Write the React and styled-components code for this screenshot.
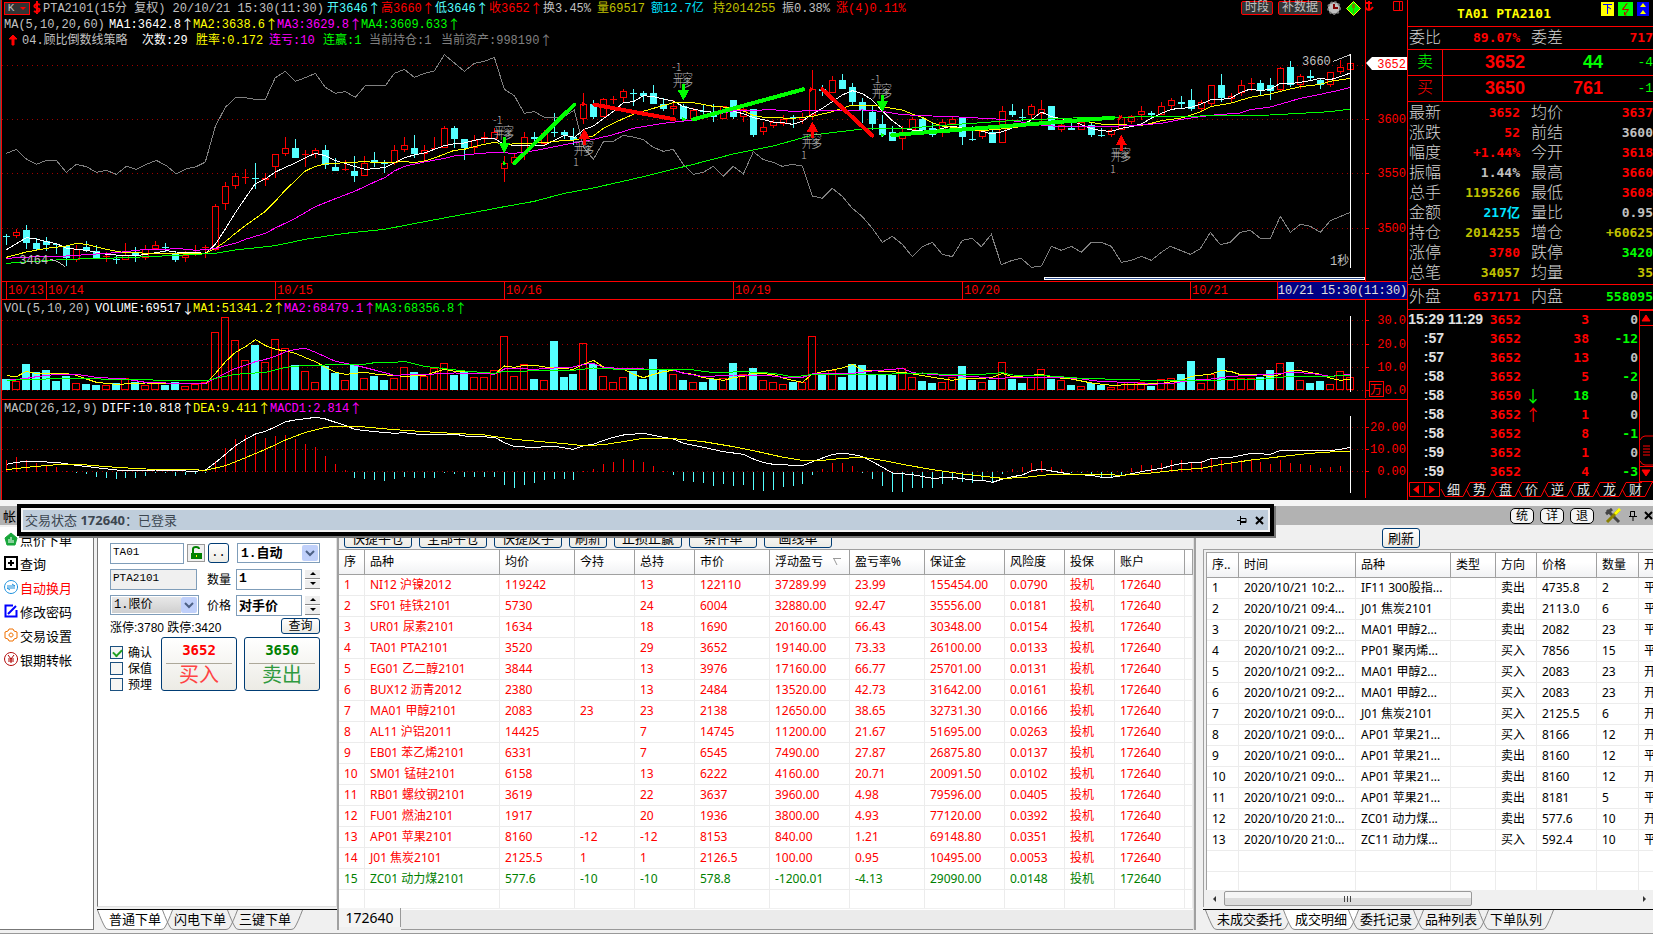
import React from 'react'
import styled, { createGlobalStyle } from 'styled-components';

const RED = '#ff0000';
const GREEN = '#00ff00';
const CYAN = '#54ffff';
const YELLOW = '#ffff00';
const OLIVE = '#c0c000';
const MAGENTA = '#ff00ff';
const SILVER = '#c0c0c0';
const GRAY = '#808080';

const MONO = `'Liberation Mono', 'Noto Sans CJK SC', monospace`;
const BOLD = `'DejaVu Sans Mono', 'Noto Sans CJK SC', monospace`;
const SANS = `'Noto Sans', 'Noto Sans CJK SC', sans-serif`;

/* ---------- data ---------- */

// high, body top, body bottom, low, 1 = up (chart units, 3 per pixel)
const candles = [
  [703,709,712,735,0],[688,697,706,714,1],[675,690,728,747,0],[714,729,747,753,0],[712,724,735,753,0],
  [728,732,735,762,0],[735,738,773,798,0],[735,748,779,785,1],[722,741,751,755,0],[735,754,774,777,0],
  [755,768,771,786,1],[765,776,779,791,0],[730,765,779,780,1],[741,757,768,786,0],[735,748,772,779,1],
  [722,736,747,750,1],[729,741,744,755,0],[755,762,779,786,0],[753,766,773,785,1],[735,755,760,767,1],
  [735,742,745,773,1],[612,619,748,752,1],[546,559,611,630,1],[519,529,557,567,1],[507,530,533,551,1],
  [489,534,537,567,0],[519,535,540,557,1],[462,463,500,534,1],[411,445,460,468,1],[417,444,474,474,0],
  [450,462,465,501,1],[444,451,460,475,1],[435,450,493,507,0],[475,502,513,513,0],[480,508,511,514,1],
  [468,513,528,546,0],[468,490,527,528,1],[456,480,486,501,0],[480,488,491,519,0],[435,451,487,495,1],
  [411,436,448,456,1],[405,444,462,474,0],[435,451,460,480,1],[411,444,448,451,1],[378,385,443,444,1],
  [378,384,417,444,0],[417,417,444,480,0],[405,419,443,462,1],[396,411,414,429,1],[384,397,416,418,1],
  [468,490,506,546,1],[460,470,487,490,1],[396,412,460,480,1],[397,411,417,430,0],[390,400,430,435,1],
  [339,397,400,411,0],[390,397,405,418,0],[384,411,420,435,0],[279,313,355,372,1],[300,313,351,357,0],
  [295,296,349,350,1],[288,296,299,313,1],[267,274,292,307,1],[267,280,283,318,0],[273,279,288,306,0],
  [255,279,312,313,0],[294,311,327,333,0],[300,319,325,345,1],[312,318,357,360,0],[325,330,355,357,1],
  [313,334,337,345,0],[313,335,350,366,0],[318,319,355,357,1],[300,300,351,357,0],[325,328,349,366,1],
  [327,327,405,411,0],[366,380,394,405,1],[360,367,376,384,1],[345,358,370,378,1],[345,351,354,384,0],
  [339,352,358,372,1],[210,268,345,360,1],[255,267,273,288,0],[228,241,278,280,1],[222,240,267,268,0],
  [249,261,306,318,0],[295,306,330,370,0],[318,335,372,390,0],[345,372,405,411,0],[378,396,423,424,0],
  [378,396,415,450,1],[350,358,390,392,1],[350,357,390,392,0],[366,384,405,411,0],[357,367,395,411,1],
  [348,358,370,375,1],[352,354,411,435,0],[378,417,420,423,0],[390,392,409,417,1],[387,395,429,430,0],
  [318,334,428,430,1],[312,333,345,351,0],[327,350,353,364,0],[312,319,343,360,1],[300,328,340,372,1],
  [318,318,390,391,0],[370,375,388,396,1],[360,384,390,391,0],[363,367,388,389,1],[366,376,405,411,0],
  [384,405,408,411,0],[384,391,403,411,1],[345,352,388,390,1],[345,347,365,372,1],[318,334,343,360,1],
  [333,340,345,357,0],[306,319,343,346,1],[294,301,317,330,1],[288,306,312,324,0],[267,300,327,333,0],
  [300,307,325,333,1],[255,256,310,318,1],[222,255,294,306,0],[279,289,297,306,1],[240,256,278,288,1],
  [234,249,252,273,1],[240,249,272,288,0],[234,255,272,300,0],[202,203,270,275,1],[183,201,255,260,0],
  [222,229,254,266,1],[210,228,234,240,0],[234,240,255,267,0],[216,217,253,260,1],[180,202,214,222,1],
  [165,190,208,210,1],
];

const volumes = [
  252,257,207,232,225,258,243,265,267,270,271,264,250,261,270,264,270,261,273,268,262,112,67,136,196,150,202,
  132,160,210,228,262,212,234,256,208,250,243,255,250,217,231,244,220,205,240,227,247,247,226,124,244,208,252,
  254,138,246,237,145,207,244,262,247,228,252,192,222,238,255,262,261,252,250,204,238,219,256,262,268,261,260,
  124,238,225,246,207,210,237,237,240,220,247,258,264,262,247,213,255,262,255,202,252,264,246,223,252,256,270,
  274,264,270,277,262,262,262,273,253,250,237,198,265,237,189,256,250,250,246,225,205,201,256,264,258,268,229,
  245,
];

const macdBars = [
  495,486,495,503,511,516,529,534,537,546,549,552,549,549,543,533,533,543,540,537,533,497,459,432,420,423,430,
  423,420,432,447,456,483,507,525,549,552,555,558,552,546,549,549,549,533,537,546,546,546,546,570,579,570,564,
  555,552,552,555,529,522,507,501,492,495,501,513,529,540,558,561,564,573,567,573,570,585,588,585,576,573,567,
  540,522,504,504,513,534,552,573,591,591,579,579,579,567,555,561,564,558,564,537,522,516,504,498,516,522,533,
  534,540,549,549,543,519,510,510,504,495,495,500,498,489,495,498,495,492,501,507,495,504,507,510,519,516,513,
  512,
];

const priceLines = [
  ['#808080', '19,460 49,448 79,477 109,493 139,481 169,481 199,517 229,493 259,500 289,517 319,511 349,523 379,499 409,508 439,493 469,481 499,497 529,522 559,506 589,500 616,486 646,379 676,322 706,293 736,293 766,298 796,298 826,233 856,214 886,244 916,233 946,220 976,262 1006,280 1036,275 1066,292 1096,257 1156,257 1183,220 1213,208 1243,232 1273,220 1303,213 1333,164 1363,189 1393,214 1423,190 1453,184 1483,172 1513,268 1543,287 1573,340 1603,335 1633,352 1690,352 1723,330 1750,440 1780,478 1810,426 1840,424 1870,406 1900,411 1930,419 1960,442 1990,454 2020,448 2050,494 2080,523 2110,517 2140,499 2170,528 2200,499 2230,522 2260,455 2290,479 2320,487 2347,499 2377,493 2407,498 2437,588 2467,595 2497,565 2527,589 2557,625 2587,650 2617,685 2647,727 2677,709 2707,733 2737,770 2767,740 2797,727 2827,763 2857,770 2887,721 2917,715 2944,740 2974,703 3004,794 3034,782 3064,775 3094,802 3124,798 3154,739 3184,751 3214,739 3244,757 3274,727 3304,727 3334,739 3364,787 3394,781 3424,769 3454,781 3484,757 3511,739 3571,763 3601,746 3631,697 3661,734 3691,727 3721,697 3751,691 3781,715 3811,715 3841,649 3871,697 3901,673 3931,679 3961,697 3991,662 4051,637'],
  ['#ffffff', '19,749 79,713 109,717 139,725 169,731 199,744 229,748 259,751 289,757 319,763 379,767 409,767 439,763 469,758 499,752 529,756 589,758 616,760 646,733 676,687 706,638 736,594 766,551 796,537 826,516 856,502 886,489 916,473 946,460 976,467 1006,482 1036,490 1066,500 1096,508 1126,506 1156,502 1183,489 1213,473 1243,465 1273,459 1303,448 1333,437 1363,431 1393,429 1423,421 1453,415 1483,416 1513,433 1543,436 1633,436 1663,421 1693,406 1723,412 1753,388 1780,378 1813,354 1840,334 1870,308 1900,305 1930,287 1960,290 1990,297 2020,303 2050,320 2080,327 2110,333 2140,337 2170,336 2200,334 2230,341 2260,353 2290,359 2320,366 2350,368 2377,373 2407,364 2437,342 2467,325 2497,305 2527,285 2557,272 2587,281 2617,300 2647,333 2677,362 2707,384 2737,390 2767,393 2797,393 2827,385 2857,378 2887,384 2944,393 2974,402 3004,396 3034,385 3064,376 3094,360 3124,336 3154,350 3184,356 3214,362 3244,374 3274,386 3304,392 3334,394 3364,385 3394,380 3424,372 3454,355 3484,340 3514,328 3574,322 3601,313 3631,300 3661,298 3691,295 3721,278 3751,267 3781,272 3811,268 3841,250 3871,251 3901,247 3931,242 3961,235 3991,239 4021,230 4051,219'],
  [YELLOW, '19,772 79,756 139,745 199,738 229,730 259,733 319,748 349,754 379,758 469,760 529,760 616,760 646,745 676,725 706,700 736,677 796,634 826,604 856,570 886,542 916,513 946,499 976,492 1036,488 1096,485 1156,489 1213,484 1243,488 1273,483 1303,474 1363,451 1393,448 1423,440 1453,433 1483,427 1513,433 1633,428 1693,421 1723,420 1780,408 1810,385 1840,370 1870,356 1900,343 1960,325 2020,308 2080,308 2140,319 2200,323 2230,333 2260,346 2290,352 2377,355 2437,349 2497,335 2557,315 2617,315 2677,325 2707,330 2737,342 2767,352 2797,368 2827,378 2850,381 2887,386 2944,392 3004,387 3064,380 3124,368 3184,364 3244,363 3274,367 3304,372 3334,374 3424,376 3454,370 3484,362 3544,354 3601,336 3631,320 3691,310 3751,292 3811,282 3871,267 3901,260 3961,253 3991,244 4051,235'],
  [MAGENTA, '19,775 139,768 199,768 289,762 349,758 439,748 499,748 529,745 589,751 646,746 676,737 706,730 736,718 796,700 826,684 886,655 946,620 1006,596 1066,573 1126,545 1156,532 1183,513 1213,499 1273,486 1333,475 1363,468 1423,462 1483,457 1543,460 1603,452 1693,434 1780,418 1840,404 1900,385 1990,370 2080,360 2140,345 2200,333 2317,329 2377,334 2437,332 2587,330 2647,334 2707,344 2797,348 2857,350 2917,353 3004,358 3064,366 3124,375 3184,380 3244,379 3334,379 3424,375 3484,370 3544,358 3631,346 3721,339 3751,329 3811,321 3901,295 3961,283 4021,270 4051,262'],
  [GREEN, '19,790 199,778 379,773 529,766 646,760 706,750 826,737 916,718 1036,700 1153,688 1273,665 1423,637 1513,620 1603,604 1693,580 1780,564 1930,530 2080,493 2200,462 2320,438 2437,405 2587,387 2737,384 2797,378 2887,372 2974,366 3064,360 3244,353 3484,350 3661,347 3811,345 3901,340 3991,335 4051,327'],
];

// index,y pairs
const volumeLines = [
  [YELLOW, '0,242 1,245 2,229 3,236 6,236 7,241 8,252 9,262 11,268 14,264 17,265 20,267 21,235 22,200 23,172 24,155 25,134 26,152 27,163 28,168 29,175 30,188 31,200 32,217 33,232 34,238 36,232 37,237 40,244 42,241 43,232 44,223 45,229 47,230 49,238 50,213 51,217 52,211 53,211 54,216 57,223 58,208 59,196 60,216 62,222 63,238 64,248 65,238 66,230 67,226 68,234 69,238 70,248 72,256 73,248 74,244 75,235 77,238 78,250 80,262 81,237 82,230 84,219 85,208 86,225 88,229 90,232 91,237 93,247 95,256 96,250 98,250 99,247 100,235 101,246 104,238 105,247 107,252 109,264 111,271 114,268 116,265 118,256 119,244 121,237 122,226 123,230 124,240 126,238 127,246 128,238 129,226 130,227 132,238 133,250 134,256 135,252'],
  [MAGENTA, '0,256 2,250 3,245 5,238 7,238 9,247 12,252 14,262 17,265 20,265 21,250 22,235 23,220 24,211 25,200 26,193 27,184 28,170 29,163 30,160 31,172 33,199 35,210 37,225 39,241 41,238 43,237 45,234 48,235 49,238 50,222 51,220 53,223 55,219 57,216 58,208 59,205 60,218 64,222 66,222 67,225 68,235 70,245 73,240 76,240 78,247 80,247 81,237 85,235 87,228 89,223 90,220 91,233 94,241 97,244 99,250 103,247 106,247 108,252 110,260 113,262 115,268 117,265 119,256 121,252 123,244 127,238 129,232 131,235 133,244 135,238'],
  [GREEN, '0,256 6,250 20,258 21,250 23,238 26,232 28,217 30,211 36,208 37,203 39,202 40,199 42,214 44,221 46,228 49,235 50,229 57,226 59,219 61,222 67,222 69,225 71,233 74,230 77,235 79,246 81,238 88,238 92,234 94,238 98,238 100,233 101,240 104,241 108,250 115,256 121,256 123,254 126,253 129,244 133,244 135,240'],
];

const macdLines = [
  ['#ffffff', '0,508 1,502 2,499 5,502 7,511 9,518 11,525 13,528 15,525 19,529 20,525 21,503 22,478 23,452 24,433 25,417 26,409 27,395 28,380 29,375 30,371 31,367 32,372 33,382 34,391 35,403 37,410 39,415 40,413 42,420 44,418 45,417 46,423 49,427 50,443 51,455 53,457 55,454 57,463 58,452 59,448 60,436 61,427 62,420 64,415 66,427 67,432 68,445 70,457 72,470 74,478 75,492 76,503 77,508 80,512 81,500 83,478 84,475 85,478 86,485 87,500 88,517 89,534 91,539 93,550 95,547 97,555 98,556 99,562 100,552 101,545 102,540 103,527 104,523 105,528 107,538 109,541 110,547 111,547 112,542 114,530 116,520 117,512 118,505 120,502 121,490 123,487 125,475 127,478 128,466 129,468 131,466 133,467 134,463 135,457'],
  [YELLOW, '0,524 2,517 5,509 8,510 11,517 14,522 18,523 20,526 22,512 24,488 26,463 28,435 30,412 32,397 33,394 36,396 39,404 43,412 48,420 51,433 56,446 58,452 60,449 63,435 64,430 67,431 70,440 73,455 75,467 78,487 80,496 82,496 84,490 86,487 88,496 90,508 93,524 96,537 100,550 102,548 105,538 110,538 112,541 115,534 118,524 120,520 122,508 125,495 128,485 131,475 133,471 135,468'],
];

const trades = [
  [1543,490,1723,314,GREEN],
  [1783,314,2023,358,RED],
  [2080,358,2410,268,GREEN],
  [2467,268,2617,407,RED],
  [2677,405,3339,353,GREEN],
];

const sells = [[1513,410],[2050,252],[2647,286]];
const buys = [[1753,385],[2437,364],[3364,404]];

const stats = [
  ['最新','3652',RED,'均价','3637',RED],
  ['涨跌','52',RED,'前结','3600',SILVER],
  ['幅度','+1.44%',RED,'今开','3618',RED],
  ['振幅','1.44%',SILVER,'最高','3660',RED],
  ['总手','1195266',OLIVE,'最低','3608',RED],
  ['金额','217亿','#00e5ff','量比','0.95',SILVER],
  ['持仓','2014255',OLIVE,'增仓','+60625',OLIVE],
  ['涨停','3780',RED,'跌停','3420',GREEN],
  ['总笔','34057',OLIVE,'均量','35',OLIVE],
];

const ticks = [
  ['15:29','11:29','3652','','3','0'],
  [':57','','3652','','38','-12'],
  [':57','','3652','','13','0'],
  [':58','','3652','','5','-2'],
  [':58','','3650','↓','18','0'],
  [':58','','3652','↑','1','0'],
  [':58','','3652','','8','-1'],
  [':59','','3652','','1','0'],
  [':59','','3652','','4','-3'],
];

const positionCols = [
  ['序',26],['品种',135],['均价',75],['今持',60],['总持',60],['市价',75],['浮动盈亏',80],
  ['盈亏率%',75],['保证金',80],['风险度',60],['投保',50],['账户',70],
];

const positions = [
  ['NI12 沪镍2012','119242','','13','122110','37289.99','23.99','155454.00','0.0790'],
  ['SF01 硅铁2101','5730','','24','6004','32880.00','92.47','35556.00','0.0181'],
  ['UR01 尿素2101','1634','','18','1690','20160.00','66.43','30348.00','0.0154'],
  ['TA01 PTA2101','3520','','29','3652','19140.00','73.33','26100.00','0.0133'],
  ['EG01 乙二醇2101','3844','','13','3976','17160.00','66.77','25701.00','0.0131'],
  ['BUX12 沥青2012','2380','','13','2484','13520.00','42.73','31642.00','0.0161'],
  ['MA01 甲醇2101','2083','23','23','2138','12650.00','38.65','32731.30','0.0166'],
  ['AL11 沪铝2011','14425','','7','14745','11200.00','21.67','51695.00','0.0263'],
  ['EB01 苯乙烯2101','6331','','7','6545','7490.00','27.87','26875.80','0.0137'],
  ['SM01 锰硅2101','6158','','13','6222','4160.00','20.71','20091.50','0.0102'],
  ['RB01 螺纹钢2101','3619','','22','3637','3960.00','4.98','79596.00','0.0405'],
  ['FU01 燃油2101','1917','','20','1936','3800.00','4.93','77120.00','0.0392'],
  ['AP01 苹果2101','8160','-12','-12','8153','840.00','1.21','69148.80','0.0351'],
  ['J01 焦炭2101','2125.5','1','1','2126.5','100.00','0.95','10495.00','0.0053'],
  ['ZC01 动力煤2101','577.6','-10','-10','578.8','-1200.01','-4.13','29090.00','0.0148'],
];

const fillCols = [
  ['序..',32],['时间',117],['品种',95],['类型',45],['方向',41],['价格',60],['数量',42],['开平',60],
];

const fills = [
  ['2020/10/21 10:2...','IF11 300股指...','','卖出','4735.8','2','平仓'],
  ['2020/10/21 09:4...','J01 焦炭2101','','卖出','2113.0','6','平仓'],
  ['2020/10/21 09:2...','MA01 甲醇2...','','卖出','2082','23','平仓'],
  ['2020/10/21 09:2...','PP01 聚丙烯...','','买入','7856','15','平仓'],
  ['2020/10/21 09:2...','MA01 甲醇2...','','买入','2083','23','开仓'],
  ['2020/10/21 09:2...','MA01 甲醇2...','','买入','2083','23','开仓'],
  ['2020/10/21 09:0...','J01 焦炭2101','','买入','2125.5','6','开仓'],
  ['2020/10/21 09:0...','AP01 苹果21...','','买入','8166','12','开仓'],
  ['2020/10/21 09:0...','AP01 苹果21...','','卖出','8160','12','平仓'],
  ['2020/10/21 09:0...','AP01 苹果21...','','卖出','8160','12','开仓'],
  ['2020/10/21 09:0...','AP01 苹果21...','','卖出','8181','5','平仓'],
  ['2020/10/20 21:0...','ZC01 动力煤...','','卖出','577.6','10','开仓'],
  ['2020/10/20 21:0...','ZC11 动力煤...','','买入','592.4','10','平仓'],
];

/* ---------- charts ---------- */

const X = (i) => Math.round(6 + 9.956 * i) * 3 + 1.5;
const byIndex = (s) => s.split(' ').map((p) => {
  const [i, y] = p.split(',');
  return `${X(Number(i))},${y}`;
}).join(' ');

function GridLines({ ys }) {
  return ys.map((y) => (
    <line key={y} x1="6" x2="4098" y1={y} y2={y} stroke="#a00000" strokeWidth="3" strokeDasharray="3 12"/>
  ));
}

function Candle({ i, c }) {
  const [high, top, bottom, low, up] = c;
  const x = X(i);
  const color = up ? RED : CYAN;
  const flat = bottom - top <= 4;
  return (
    <g stroke={color} strokeWidth="3">
      <line x1={x} x2={x} y1={high} y2={up ? top : low}/>
      {up ? <line x1={x} x2={x} y1={bottom} y2={low}/> : null}
      {flat
        ? <line x1={x - 10} x2={x + 10} y1={top + 1} y2={top + 1}/>
        : <rect x={x - 9} y={top + 1} width="18" height={bottom - top - 2} fill={up ? 'none' : CYAN}/>}
    </g>
  );
}

function SignalText({ x, y, below }) {
  return (
    <g fill="#b8b8b8" fontSize="33" fontFamily="Noto Sans CJK SC" fontWeight="300">
      <text x={x - 32} y={y + 28}>平</text>
      <text x={x - 32} y={y + 42}>开</text>
      <text x={x - 4} y={y + 28}>空</text>
      <text x={x - 4} y={y + 42}>多</text>
      <text x={x - 34} y={below ? y + 76 : y - 4}>{below ? '1' : '-1'}</text>
    </g>
  );
}

function PriceChart() {
  return (
    <Plot viewBox="6 144 4089 699" preserveAspectRatio="none" $height={233} shapeRendering="crispEdges">
      <GridLines ys={[196, 358, 520, 685]}/>
      {candles.map((c, i) => <Candle key={i} i={i} c={c}/>)}
      {priceLines.map(([color, points]) => (
        <polyline key={color} points={points} fill="none" stroke={color} strokeWidth="3"/>
      ))}
      {trades.map(([x1, y1, x2, y2, color]) => (
        <line key={x1} x1={x1} y1={y1} x2={x2} y2={y2} stroke={color} strokeWidth="12" strokeLinecap="round"/>
      ))}
      {sells.map(([x, y]) => (
        <g key={x}>
          <SignalText x={x} y={y - 34}/>
          <path d={`M${x - 5} ${y}h10v18h12l-17 32l-17 -32h12z`} fill={GREEN}/>
        </g>
      ))}
      {buys.map(([x, y]) => (
        <g key={x}>
          <SignalText x={x} y={y + 38} below/>
          <path d={`M${x} ${y}l17 32h-12v18h-10v-18h-12z`} fill={RED}/>
        </g>
      ))}
      <path d="M1508 483v14l12 -7zM2046 351v14l12 -7zM2642 398v14l12 -7z" fill={GREEN}/>
      <path d="M1746 306v14l12 -7zM2431 261v14l12 -7zM3358 345v14l12 -7z" fill={RED}/>
      <path d="M150 778L172 784L196 800M4000 184L4051 164" fill="none" stroke={SILVER} strokeWidth="3"/>
      <g fill={SILVER} fontSize="36" fontFamily="Liberation Mono">
        <text x="58" y="791">3464</text>
        <text x="3906" y="196">3660</text>
        <text x="3990" y="796" fontFamily="Liberation Mono, Noto Sans CJK SC">1秒</text>
      </g>
      <line x1="4051.5" x2="4051.5" y1="162" y2="803" stroke="#fff" strokeWidth="3"/>
      <rect x="3133" y="830" width="961" height="9" fill="#fff"/>
      <rect x="3136" y="833" width="955" height="3" fill="#2a4a8a"/>
    </Plot>
  );
}

function VolumeChart() {
  return (
    <Plot viewBox="6 63 4089 249" preserveAspectRatio="none" $height={83} shapeRendering="crispEdges">
      <GridLines ys={[76, 148, 217, 286]}/>
      {volumes.map((top, i) => (candles[i][4]
        ? <rect key={i} x={X(i) - 12} y={top + 1} width="21" height={283 - top} fill="none" stroke={RED} strokeWidth="3"/>
        : <rect key={i} x={X(i) - 14} y={top} width="24" height={286 - top} fill={CYAN}/>))}
      {volumeLines.map(([color, s]) => (
        <polyline key={color} points={byIndex(s)} fill="none" stroke={color} strokeWidth="3"/>
      ))}
      <line x1="4051.5" x2="4051.5" y1="63" y2="291" stroke="#fff" strokeWidth="3"/>
    </Plot>
  );
}

function MacdChart() {
  return (
    <Plot viewBox="6 363 4089 252" preserveAspectRatio="none" $height={84} shapeRendering="crispEdges">
      <GridLines ys={[397, 463, 529]}/>
      {macdBars.map((y, i) => (
        <line key={i} x1={X(i)} x2={X(i)} y1="530" y2={y} stroke={y > 529 ? CYAN : RED} strokeWidth="3"/>
      ))}
      {macdLines.map(([color, s]) => (
        <polyline key={color} points={byIndex(s)} fill="none" stroke={color} strokeWidth="3"/>
      ))}
      <line x1="4051.5" x2="4051.5" y1="363" y2="594" stroke="#fff" strokeWidth="3"/>
    </Plot>
  );
}

function Axis({ height, end, labels, children }) {
  return (
    <AxisSvg width="42" height={height} viewBox={`0 0 42 ${height}`}>
      <path d={`M0.5 0V${end}`} stroke={RED}/>
      {labels.map(([text, y]) => (
        <g key={text}>
          <path d={`M0 ${y}.5h4`} stroke={RED}/>
          <text x="41" y={y + 4} textAnchor="end" fill={RED}>{text}</text>
        </g>
      ))}
      {children}
    </AxisSvg>
  );
}

function Header({ items }) {
  return items.map(([text, color, width, arrow]) => (
    <HeaderItem key={text} $color={color} $width={width}>
      {text}{arrow ? <Arrow>{arrow}</Arrow> : null}
    </HeaderItem>
  ));
}

function Charts() {
  return (
    <ChartArea>
      <Pane>
        <div>
          <HeaderRow>
            <KButton type="button">K<i/></KButton>
            <svg width="11" height="14" viewBox="0 0 11 14"><path d="M5 0v13M8 4Q5 2 3 4T5 7T7 10T2 10" fill="none" stroke={RED} strokeWidth="2"/></svg>
            <Header items={[
              ['PTA2101(15分 复权) 20/10/21 15:30(11:30)', SILVER, 284],
              ['开3646', CYAN, 54, '↑'],
              ['高3660', RED, 54, '↑'],
              ['低3646', CYAN, 54, '↑'],
              ['收3652', RED, 54, '↑'],
              ['换3.45%', SILVER, 54],
              ['量69517', OLIVE, 54],
              ['额12.7亿', '#00e5ff', 62],
              ['持2014255', OLIVE, 69],
              ['振0.38%', SILVER, 54],
              ['涨(4)0.11%', RED, 80],
            ]}/>
            <Tools>
              <DarkButton type="button">时段</DarkButton>
              <DarkButton type="button">补数据</DarkButton>
              <svg width="14" height="14" viewBox="0 0 14 14">
                <circle cx="7" cy="7" r="6" fill={SILVER} stroke="#777" strokeWidth="2" strokeDasharray="2 2"/>
                <path d="M7 3v4h4" fill="none" stroke="#800000" strokeWidth="2"/>
              </svg>
              <svg width="15" height="15" viewBox="0 0 15 15">
                <path d="M7.5 0.5L14.5 7.5L7.5 14.5L0.5 7.5z" fill={GREEN} stroke={YELLOW}/>
                <path d="M6 3h3v4h-3zM7 7h1v5h-1z" fill="#808000"/>
              </svg>
            </Tools>
          </HeaderRow>
          <HeaderRow>
            <Header items={[
              ['MA(5,10,20,60)', SILVER, 105],
              ['MA1:3642.8', '#fff', 84, '↑'],
              ['MA2:3638.6', YELLOW, 84, '↑'],
              ['MA3:3629.8', MAGENTA, 84, '↑'],
              ['MA4:3609.633', GREEN, 105, '↑'],
            ]}/>
          </HeaderRow>
          <HeaderRow>
            <svg width="18" height="14" viewBox="0 0 18 14"><path d="M9 2l4 4h-3v6h-2v-6h-3z" fill={RED} stroke={RED}/></svg>
            <Header items={[
              ['04.顾比倒数线策略', SILVER, 120],
              ['次数:29', '#fff', 54],
              ['胜率:0.172', YELLOW, 73],
              ['连亏:10', MAGENTA, 54],
              ['连赢:1', GREEN, 46],
              ['当前持仓:1', GRAY, 72],
              ['当前资产:998190', GRAY, 120, '↑'],
            ]}/>
          </HeaderRow>
          <PriceChart/>
        </div>
        <Axis height={281} end={281} labels={[['3600', 119], ['3550', 173], ['3500', 228]]}>
          <path d="M4 1v10M1 3h6M0 7q4 6 8 0" fill="none" stroke={RED} strokeWidth="2"/>
          <path d="M28.5 1.5h9v9h-9zM34.5 1v10" fill="none" stroke={RED}/>
          <path d="M1 63L7 57H42V70H7z" fill="#fff"/>
          <text x="41" y="68" textAnchor="end" fill={RED}>3652</text>
        </Axis>
      </Pane>
      <DateRow>
        <DateMark $width={40}>10/13</DateMark>
        <DateMark $width={229}>10/14</DateMark>
        <DateMark $width={229}>10/15</DateMark>
        <DateMark $width={229}>10/16</DateMark>
        <DateMark $width={229}>10/19</DateMark>
        <DateMark $width={228}>10/20</DateMark>
        <DateMark $width={80}>10/21</DateMark>
        <DateNow>10/21 15:30(11:30)</DateNow>
      </DateRow>
      <Pane>
        <div>
          <HeaderRow>
            <Header items={[
              ['VOL(5,10,20)', SILVER, 91],
              ['VOLUME:69517', '#fff', 98, '↓'],
              ['MA1:51341.2', YELLOW, 91, '↑'],
              ['MA2:68479.1', MAGENTA, 91, '↑'],
              ['MA3:68356.8', GREEN, 91, '↑'],
            ]}/>
          </HeaderRow>
          <VolumeChart/>
        </div>
        <Axis height={99} end={98} labels={[['30.0', 20], ['20.0', 44], ['10.0', 67], ['0.0', 90]]}>
          <rect x="4.5" y="81.5" width="14" height="15" fill="#000" stroke={RED}/>
          <text x="5" y="94" fill={RED}>万</text>
        </Axis>
      </Pane>
      <Pane $last>
        <div>
          <HeaderRow>
            <Header items={[
              ['MACD(26,12,9)', SILVER, 98],
              ['DIFF:10.818', '#fff', 91, '↑'],
              ['DEA:9.411', YELLOW, 77, '↑'],
              ['MACD1:2.814', MAGENTA, 91, '↑'],
            ]}/>
          </HeaderRow>
          <MacdChart/>
        </div>
        <Axis height={100} end={98} labels={[['20.00', 27], ['10.00', 49], ['0.00', 71]]}/>
      </Pane>
    </ChartArea>
  );
}

/* ---------- quote panel ---------- */

function Quote() {
  return (
    <QuotePanel>
      <QuoteTitle>
        TA01 PTA2101
        <Badges>
          <svg width="13" height="14" viewBox="0 0 13 14"><path d="M0 0h13v14H0z" fill={YELLOW}/><path d="M2 2.5h9M6.5 2v10M7 5l3 2" fill="none" stroke="#0000ff"/></svg>
          <svg width="15" height="14" viewBox="0 0 15 14"><path d="M0 0h15v14H0z" fill={GREEN}/><path d="M9 1.5L4.5 7.5h6L6.5 13M4.5 7.5L9 1.5M6.5 13v-3M6.5 13h2" fill="none" stroke="#c00000"/></svg>
          <svg width="12" height="14" viewBox="0 0 12 14"><path d="M0 0h12v14H0z" fill="#0000ff"/><path d="M6 1l3 4H3zM6 8l3 4H3z" fill={YELLOW}/></svg>
        </Badges>
      </QuoteTitle>
      <QuoteRow $height={23}>
        <Pair>委比<Num $color={RED}>89.07%</Num></Pair>
        <Pair>委差<Num $color={RED}>717</Num></Pair>
      </QuoteRow>
      <Bid><BidSide $color={GREEN}>卖</BidSide><BigNum $color={RED}>3652</BigNum><BigNum $color={GREEN}>44</BigNum><Delta>-4</Delta></Bid>
      <Bid><BidSide $color={RED}>买</BidSide><BigNum $color={RED}>3650</BigNum><BigNum $color={RED}>761</BigNum><Delta>-1</Delta></Bid>
      <Stats>
        {stats.map(([a, av, ac, b, bv, bc]) => (
          <StatRow key={a}>
            <Pair>{a}<Num $color={ac}>{av}</Num></Pair>
            <Pair>{b}<Num $color={bc}>{bv}</Num></Pair>
          </StatRow>
        ))}
      </Stats>
      <QuoteRow $height={25}>
        <Pair>外盘<Num $color={RED}>637171</Num></Pair>
        <Pair>内盘<Num $color={GREEN}>558095</Num></Pair>
      </QuoteRow>
      <TickArea>
        <TickTable>
          <tbody>
            {ticks.map(([t1, t2, price, dir, vol, d], i) => {
              const color = dir === '↓' ? GREEN : RED;
              return (
                <tr key={i}>
                  <TimeCell $width={36}>{t1}</TimeCell>
                  <TimeCell $width={39}>{t2}</TimeCell>
                  <TickCell $width={38} $color={RED}>{price}</TickCell>
                  <DirCell $width={20} $color={color}>{dir}</DirCell>
                  <TickCell $width={48} $color={color}>{vol}</TickCell>
                  <TickCell $width={49} $color={d === '0' ? SILVER : GREEN}>{d}</TickCell>
                </tr>
              );
            })}
          </tbody>
        </TickTable>
        <svg width="14" height="172" viewBox="0 0 14 172" fill="none" stroke={RED}>
          <path d="M0.5 0.5H14M0.5 0V172M0 15.5H14M0 156.5H14M0 171.5H14"/>
          <path d="M7 5L11 11H3zM7 166L11 160H3z" fill={RED}/>
          <path d="M1 130q2 -4 5 -4h8M1 151q2 4 5 4h8M4 136h7M4 139h7M4 142h7M4 145h7"/>
        </svg>
      </TickArea>
      <QuoteTabs>
        <svg width="31" height="15" viewBox="0 0 31 15">
          <path d="M0.5 0.5h30v14h-30zM15.5 0v15" fill="none" stroke={RED}/>
          <path d="M10 3v9L4 7.5zM20 3v9L26 7.5z" fill={RED}/>
        </svg>
        {['细', '势', '盘', '价', '逆', '成', '龙', '财'].map((t, i) => (
          <React.Fragment key={t}>
            {i
              ? <svg width="13" height="16" viewBox="0 0 13 16"><path d="M0 14.5H3L10 0.5H13M6 7L10 14.5H13" fill="none" stroke={RED}/></svg>
              : <svg width="7" height="16" viewBox="0 0 7 16"><path d="M1 7L5 14.5H7" fill="none" stroke={RED}/></svg>}
            <QuoteTab type="button" $active={i === 0}>{t}</QuoteTab>
          </React.Fragment>
        ))}
        <svg width="13" height="16" viewBox="0 0 13 16"><path d="M0 14.5H3L10 0.5H13" fill="none" stroke={RED}/></svg>
      </QuoteTabs>
    </QuotePanel>
  );
}

/* ---------- trading ---------- */

const menu = [
  ['点价下单', <><path d="M7 1l6 5l-2 7H3L1 6z" fill="#17a63a" stroke="#17a63a"/><path d="M5 7v4M7 5v6M9 8v3" stroke="#fff"/></>],
  ['查询', <path d="M1 1h12v12H1zM7 4v6M4 7h6" stroke="#000" strokeWidth="2"/>],
  ['自动换月', <path d="M7 0.5a6.5 6.5 0 1 0 0.1 0M3 6h8L8 4M11 8H3l3 2" stroke="#1a8fdc"/>, true],
  ['修改密码', <path d="M9 1.5H1.5v11h11V6M4 10L12 2" stroke="#0000ff" strokeWidth="2"/>],
  ['交易设置', <path d="M5 1h4l1 2l3 1v6l-3 1l-1 2H5l-1 -2l-3 -1V4l3 -1zM7 5a2 2 0 1 0 0.1 0" stroke="#f07000"/>],
  ['银期转帐', <path d="M7 0.5a6.5 6.5 0 1 0 0.1 0M4 3l3 4l3 -4M7 7v4M4 7h6M4 9h6" stroke="#b00000"/>],
];

function BottomTab({ text, active }) {
  const fill = active ? '#fff' : 'none';
  return (
    <TabWrap type="button">
      <svg width="12" height="20" viewBox="0 0 12 20"><path d="M0.5 0Q5 12 8 17Q9 19.5 12 19.5V0z" fill={fill}/><path d="M0.5 0Q5 12 8 17Q9 19.5 12 19.5" fill="none" stroke="#888"/></svg>
      <TabText $active={active}>{text}</TabText>
      <svg width="12" height="20" viewBox="0 0 12 20"><path d="M11.5 0Q7 12 4 17Q3 19.5 0 19.5V0z" fill={fill}/><path d="M11.5 0Q7 12 4 17Q3 19.5 0 19.5" fill="none" stroke="#888"/></svg>
    </TabWrap>
  );
}

function Combo({ label, options, width, bold }) {
  return (
    <ComboBox $width={width} $gray={!bold}>
      <select aria-label={label}>{options.map((o) => <option key={o}>{o}</option>)}</select>
      <svg width="16" height="16" viewBox="0 0 16 16"><rect width="16" height="16" rx="2" fill="#c0d0fa"/><path d="M4 6l4 4l4 -4" fill="none" stroke="#4d6185" strokeWidth="2"/></svg>
    </ComboBox>
  );
}

function Spinner({ label }) {
  return (
    <SpinnerBox>
      <button type="button" aria-label={`${label}+`}><svg width="6" height="3" viewBox="0 0 6 3"><path d="M3 0l3 3H0z"/></svg></button>
      <button type="button" aria-label={`${label}-`}><svg width="6" height="3" viewBox="0 0 6 3"><path d="M3 3l3 -3H0z"/></svg></button>
    </SpinnerBox>
  );
}

function OrderForm() {
  return (
    <OrderPanel>
      <OrderBody>
        <FormRow>
          <Field $width={74} defaultValue="TA01" aria-label="合约"/>
          <LockButton type="button" aria-label="锁定">
            <svg width="12" height="14" viewBox="0 0 12 14"><path d="M1 7h11v6H1z" fill="#008000"/><path d="M3 7V3q0 -2 3 -2t3 2" fill="none" stroke="#008000" strokeWidth="2"/><path d="M6 9h1v2h-1z" fill={YELLOW}/></svg>
          </LockButton>
          <DotsButton type="button">..</DotsButton>
          <Push/>
          <Combo label="开平" options={['1.自动']} width={83} bold/>
        </FormRow>
        <FormRow>
          <Field $width={87} $gray readOnly value="PTA2101" aria-label="合约代码"/>
          <FieldLabel htmlFor="qty">数量</FieldLabel>
          <Field $width={66} $bold id="qty" defaultValue="1"/>
          <Spinner label="数量"/>
        </FormRow>
        <FormRow>
          <Combo label="报价方式" options={['1.限价']} width={89}/>
          <FieldLabel htmlFor="price">价格</FieldLabel>
          <Field $width={66} $bold id="price" defaultValue="对手价"/>
          <Spinner label="价格"/>
        </FormRow>
        <LimitRow>
          <span>涨停:3780 跌停:3420</span>
          <QueryButton type="button">查询</QueryButton>
        </LimitRow>
        <Deal>
          <Checks>
            <label><input type="checkbox" defaultChecked/>确认</label>
            <label><input type="checkbox"/>保值</label>
            <label><input type="checkbox"/>预埋</label>
          </Checks>
          <DealButton type="button" $color="#ff4444" $price="#ff0000"><b>3652</b><span>买入</span></DealButton>
          <DealButton type="button" $color="#2f9a3f" $price="#008000"><b>3650</b><span>卖出</span></DealButton>
        </Deal>
      </OrderBody>
      <TabBar>
        <BottomTab text="普通下单" active/>
        <BottomTab text="闪电下单"/>
        <BottomTab text="三键下单"/>
      </TabBar>
    </OrderPanel>
  );
}

function Cols({ cols, rest }) {
  return (
    <colgroup>
      {cols.map(([name, width]) => <Col key={name} $width={width}/>)}
      {rest ? <col/> : null}
    </colgroup>
  );
}

function Positions() {
  return (
    <PositionsPanel>
      <Toolbar>
        {['快捷平仓', '全部平仓', '快捷反手', '刷新', '止损止赢', '条件单', '画线单'].map((t) => (
          <XpButton type="button" key={t} $width={t === '刷新' ? 38 : 68}>{t}</XpButton>
        ))}
      </Toolbar>
      <Sheet>
        <DataTable>
          <Cols cols={positionCols} rest/>
          <thead>
            <tr>
              {positionCols.map(([name]) => (
                <th key={name}>{name}{name === '浮动盈亏' ? <SortMark width="8" height="8" viewBox="0 0 8 8"><path d="M0 0.5h8M1 1l3 6" fill="none" stroke="#999"/></SortMark> : null}</th>
              ))}
              <th/>
            </tr>
          </thead>
          <tbody>
            {positions.map((row, i) => (
              <Row key={row[0]} $color={i === 14 ? '#008000' : RED}>
                <td>{i + 1}</td>
                {row.map((v, k) => <td key={k}>{v}</td>)}
                <td>投机</td>
                <td>172640</td>
                <td/>
              </Row>
            ))}
            <Row>{positionCols.map(([name]) => <td key={name}/>)}<td/></Row>
          </tbody>
        </DataTable>
      </Sheet>
      <AccountBar><AccountTab type="button">172640</AccountTab><AccountRest/></AccountBar>
    </PositionsPanel>
  );
}

function Fills() {
  return (
    <FillsPanel>
      <RefreshBar><XpButton type="button" $width={38}>刷新</XpButton></RefreshBar>
      <FillsFrame>
        <Sheet>
          <DataTable $width={492}>
            <Cols cols={fillCols}/>
            <thead><tr>{fillCols.map(([name]) => <th key={name}>{name}</th>)}</tr></thead>
            <tbody>
              {fills.map((row, i) => (
                <Row key={i}>
                  <td>{i + 1}</td>
                  {row.map((v, k) => <td key={k}>{v}</td>)}
                </Row>
              ))}
              <Row>{fillCols.map(([name]) => <td key={name}/>)}</Row>
              <Row>{fillCols.map(([name]) => <td key={name}/>)}</Row>
            </tbody>
          </DataTable>
        </Sheet>
        <ScrollRow>
          <svg width="18" height="16" viewBox="0 0 18 16"><path d="M10 5v6l-3 -3z" fill="#333"/></svg>
          <Thumb><svg width="8" height="6" viewBox="0 0 8 6"><path d="M0.5 0v6M3.5 0v6M6.5 0v6" stroke="#444"/></svg></Thumb>
          <Push/>
          <svg width="16" height="16" viewBox="0 0 16 16"><path d="M6 5v6l3 -3z" fill="#333"/></svg>
        </ScrollRow>
      </FillsFrame>
      <TabBar $indent>
        <BottomTab text="未成交委托"/>
        <BottomTab text="成交明细" active/>
        <BottomTab text="委托记录"/>
        <BottomTab text="品种列表"/>
        <BottomTab text="下单队列"/>
      </TabBar>
    </FillsPanel>
  );
}

const Pin = () => <svg width="10" height="12" viewBox="0 0 10 12"><path d="M2.5 6V1.5h4V6M1 6.5h8M5 7v4M6.5 1v5" fill="none" stroke="#000"/></svg>;
const SidePin = () => <svg width="10" height="10" viewBox="0 0 10 10"><path d="M0 5.5h3M3.5 1v9M4 3.5h5v4H4M4 6.5h5" fill="none" stroke="#000"/></svg>;
const Cross = () => <svg width="9" height="9" viewBox="0 0 9 9"><path d="M1 1l7 7M8 1l-7 7" stroke="#000" strokeWidth="2"/></svg>;

function App() {
  return (
    <Page>
      <GlobalStyle/>
      <Market>
        <Charts/>
        <Quote/>
      </Market>
      <TradeBar>
        <span>帐</span>
        <Push/>
        <Pill type="button">统</Pill>
        <Pill type="button">详</Pill>
        <Pill type="button">退</Pill>
        <svg width="22" height="16" viewBox="-4 0 22 16"><path d="M3 2l12 12M2 6l6 -5" stroke="#444" strokeWidth="3"/><path d="M15 2L3 14" stroke="#8a8000" strokeWidth="3"/><path d="M16 1l-5 5" stroke={YELLOW} strokeWidth="3"/></svg>
        <Pin/>
        <Cross/>
      </TradeBar>
      <Trade>
        <Sidebar>
          {menu.map(([text, icon, hot]) => (
            <MenuItem key={text} href="#" $hot={hot}>
              <svg width="14" height="14" viewBox="0 0 14 14" fill="none">{icon}</svg>{text}
            </MenuItem>
          ))}
        </Sidebar>
        <OrderForm/>
        <Positions/>
        <Fills/>
      </Trade>
      <StatusWindow>
        <StatusBar>
          <span>交易状态 <b>172640</b>：已登录</span>
          <Push/>
          <SidePin/>
          <Cross/>
        </StatusBar>
      </StatusWindow>
    </Page>
  );
}

export default App

/* ---------- styles ---------- */

const GlobalStyle = createGlobalStyle`
  * {
    box-sizing : border-box;
  }

  body {
    margin : 0;
    background-color : #f0f0f0;
    font-family : ${SANS};
    font-size : 13px;
  }

  button, input, select {
    font : inherit;
    margin : 0;
    padding : 0;
  }

  svg {
    flex : none;
    display : block;
  }
`;

const Page = styled.div`
  position : relative;
  display : flex;
  flex-direction : column;
  height : 100vh;
  overflow : hidden;
`;

const Push = styled.div`
  flex : 1;
`;

const Market = styled.div`
  flex : none;
  display : grid;
  grid-template-columns : minmax(0, 1fr) 246px;
  background-color : #000;
`;

const ChartArea = styled.div`
  border-left : 1px solid #555;
  box-shadow : inset 1px 0 0 ${RED};
  padding-left : 1px;
  font-family : ${MONO};
  font-size : 12px;
  overflow : hidden;
`;

const Pane = styled.div`
  display : grid;
  grid-template-columns : minmax(0, 1fr) 42px;
  border-bottom : ${(p) => (p.$last ? 'none' : `1px solid ${RED}`)};
`;

const HeaderRow = styled.div`
  display : flex;
  align-items : center;
  height : 16px;
  padding-left : 2px;
  white-space : nowrap;
`;

const HeaderItem = styled.span`
  flex : none;
  width : ${(p) => p.$width}px;
  height : 16px;
  color : ${(p) => p.$color};
  line-height : 18px;
  white-space : pre;
`;

const Arrow = styled.span`
  display : inline-block;
  width : 12px;
  height : 16px;
  font-family : 'Noto Sans CJK SC', sans-serif;
  font-size : 13px;
  line-height : 16px;
  text-align : center;
  vertical-align : top;
`;

const KButton = styled.button`
  display : flex;
  align-items : center;
  justify-content : space-around;
  width : 26px;
  height : 13px;
  margin-right : 2px;
  border : 1px solid ${RED};
  background-color : #333;
  color : ${SILVER};
  font-size : 11px;
  line-height : 11px;

  & > i {
    border : 3px solid transparent;
    border-top-color : ${RED};
    border-bottom : none;
  }
`;

const Tools = styled.div`
  display : flex;
  align-items : center;
  gap : 5px;
  margin-left : auto;
  padding-right : 4px;
`;

const DarkButton = styled.button`
  height : 14px;
  padding : 0 3px;
  border : 1px solid ${RED};
  border-radius : 2px;
  background-color : #333;
  color : ${SILVER};
  line-height : 12px;
`;

const Plot = styled.svg`
  width : 100%;
  height : ${(p) => p.$height}px;
`;

const AxisSvg = styled.svg`
  font-family : ${MONO};
  font-size : 12px;
`;

const DateRow = styled.div`
  display : flex;
  height : 18px;
  padding-left : 4px;
  border-bottom : 1px solid ${RED};
`;

const DateMark = styled.span`
  flex : 0 1 ${(p) => p.$width}px;
  padding-left : 1px;
  border-left : 1px solid ${RED};
  color : ${RED};
  line-height : 18px;
`;

const DateNow = styled.span`
  display : flex;
  justify-content : center;
  width : 130px;
  margin-left : auto;
  border-left : 1px solid ${RED};
  background-color : #000084;
  color : #e0e0e0;
  line-height : 18px;
  white-space : nowrap;
`;

const QuotePanel = styled.div`
  display : flex;
  flex-direction : column;
  border-left : 1px solid ${RED};
  color : #d4d4d4;
  font-family : ${BOLD};
  overflow : hidden;
`;

const QuoteTitle = styled.div`
  display : flex;
  align-items : center;
  justify-content : flex-end;
  height : 27px;
  padding-right : 4px;
  border-bottom : 1px solid ${RED};
  color : ${YELLOW};
  font-weight : 700;
`;

const Badges = styled.div`
  display : flex;
  gap : 4px;
  height : 22px;
  margin-left : 50px;
`;

const Pair = styled.div`
  display : flex;
  align-items : center;
  justify-content : space-between;
  font-size : 16px;
  font-weight : 300;
  line-height : 20px;
`;

const Num = styled.span`
  color : ${(p) => p.$color};
  font-size : 13px;
  font-weight : 700;
`;

const StatRow = styled.div`
  display : grid;
  grid-template-columns : 111px 1fr;
  column-gap : 11px;
  padding-left : 1px;
`;

const QuoteRow = styled(StatRow)`
  align-items : center;
  height : ${(p) => p.$height}px;
  border-bottom : 1px solid ${RED};
`;

const Stats = styled.div`
  padding : 1px 0;
  border-bottom : 1px solid ${RED};
`;

const Bid = styled.div`
  display : grid;
  grid-template-columns : 35px 82px 78px 1fr;
  align-items : center;
  height : 26px;
  border-bottom : 1px solid ${RED};
  text-align : right;
`;

const BidSide = styled.span`
  height : 25px;
  border-right : 1px solid ${RED};
  color : ${(p) => p.$color};
  font-size : 16px;
  font-weight : 300;
  line-height : 24px;
  text-align : center;
`;

const BigNum = styled.span`
  color : ${(p) => p.$color};
  font-family : 'Liberation Sans', sans-serif;
  font-size : 18px;
  font-weight : 700;
`;

const Delta = styled.span`
  color : ${GREEN};
  font-family : ${MONO};
`;

const TickArea = styled.div`
  display : flex;
  justify-content : space-between;
`;

const TickTable = styled.table`
  table-layout : fixed;
  width : 230px;
  height : 171px;
  border-collapse : collapse;
  font-size : 13px;
  font-weight : 700;
`;

const TickCell = styled.td`
  width : ${(p) => p.$width}px;
  height : 19px;
  padding : 0;
  color : ${(p) => p.$color};
  line-height : 19px;
  text-align : right;
`;

const TimeCell = styled(TickCell)`
  color : #e0e0e0;
  font-family : 'Liberation Sans', sans-serif;
  font-size : 14px;
`;

const DirCell = styled(TickCell)`
  font-family : 'Noto Sans CJK SC', sans-serif;
  font-size : 16px;
  font-weight : 400;
`;

const QuoteTabs = styled.div`
  display : flex;
  height : 16px;
  margin-left : 1px;
`;

const QuoteTab = styled.button`
  flex : none;
  width : 13px;
  height : 15px;
  border : 0 solid ${RED};
  border-bottom-width : 1px;
  border-top-width : ${(p) => (p.$active ? 0 : 1)}px;
  background : none;
  color : #e0e0e0;
  font-size : 13px;
  line-height : 13px;
`;

const TradeBar = styled.div`
  flex : none;
  display : flex;
  align-items : center;
  gap : 6px;
  height : 27px;
  padding : 0 0 0 3px;
  border-top : 6px solid #f4f4f4;
  border-bottom : 2px solid #f0f0f0;
  background-color : #b2b2b2;
`;

const Pill = styled.button`
  width : 24px;
  height : 16px;
  border : 1px solid #000;
  border-radius : 5px;
  background-color : #f4f4f4;
  font-size : 12px;
  line-height : 14px;
`;

const Trade = styled.div`
  flex : 1;
  display : flex;
  min-height : 0;
  padding-bottom : 3px;
  border-bottom : 1px solid #999;
`;

const Sidebar = styled.nav`
  flex : none;
  width : 94px;
  border-right : 1px solid #777;
  border-bottom : 1px solid #777;
  background-color : #fff;
`;

const MenuItem = styled.a`
  display : flex;
  align-items : center;
  gap : 2px;
  height : 24px;
  padding-left : 4px;
  color : ${(p) => (p.$hot ? RED : '#000')};
  text-decoration : none;
`;

const OrderPanel = styled.div`
  flex : none;
  display : flex;
  flex-direction : column;
  width : 245px;
  padding-left : 3px;
  border-right : 2px solid #a0a0a0;
`;

const OrderBody = styled.div`
  flex : 1;
  padding : 12px 16px 0 12px;
  border : 1px solid #e0e0e0;
  border-left : 1px solid #777;
  background-color : #fff;
  font-family : ${MONO};
  font-size : 12px;
`;

const FormRow = styled.div`
  display : flex;
  align-items : center;
  gap : 3px;
  height : 26px;
`;

const Field = styled.input`
  width : ${(p) => p.$width}px;
  height : 21px;
  padding : 0 2px 2px;
  border : 1px solid #7f9db9;
  background-color : ${(p) => (p.$gray ? '#f0f0f0' : '#fff')};
  font-size : ${(p) => (p.$bold ? 13 : 11)}px;
  font-weight : ${(p) => (p.$bold ? 700 : 400)};
`;

const FieldLabel = styled.label`
  flex : 1;
  padding-right : 2px;
  text-align : right;
  white-space : nowrap;
`;

const LockButton = styled.button`
  display : grid;
  place-items : center;
  width : 18px;
  height : 18px;
  border : 1px solid #999;
  background-color : #f0f0f0;
`;

const XpButton = styled.button`
  flex : none;
  width : ${(p) => p.$width}px;
  height : 20px;
  border : 1px solid #003c74;
  border-radius : 3px;
  background : linear-gradient(#ffffff, #ecebe5);
  line-height : 18px;
`;

const DotsButton = styled(XpButton)`
  width : 21px;
`;

const QueryButton = styled(XpButton)`
  width : 39px;
  height : 16px;
  line-height : 13px;
`;

const ComboBox = styled.div`
  display : flex;
  align-items : center;
  width : ${(p) => p.$width}px;
  height : 20px;
  padding : 1px;
  border : 1px solid #7f9db9;
  background-color : #fff;

  & > select {
    flex : 1;
    min-width : 0;
    height : 16px;
    padding-left : 2px;
    border : none;
    appearance : none;
    background : ${(p) => (p.$gray ? 'linear-gradient(#e8e8e8, #cfcfcf)' : '#fff')};
    font-size : ${(p) => (p.$gray ? 12 : 13)}px;
    font-weight : ${(p) => (p.$gray ? 400 : 700)};
  }
`;

const SpinnerBox = styled.div`
  display : flex;
  flex-direction : column;
  gap : 1px;

  & > button {
    display : grid;
    place-items : center;
    width : 15px;
    height : 9px;
    border : none;
    border-bottom : 1px solid #888;
    background-color : #eee;
  }
`;

const LimitRow = styled.div`
  display : flex;
  align-items : center;
  justify-content : space-between;
  height : 16px;
  font-family : 'Liberation Sans', 'Noto Sans CJK SC', sans-serif;
`;

const Deal = styled.div`
  display : flex;
  gap : 7px;
  padding-top : 3px;
`;

const Checks = styled.div`
  flex : 1;
  padding-top : 7px;
  white-space : nowrap;

  & > label {
    display : flex;
    align-items : center;
    gap : 5px;
    height : 16px;
  }

  & input {
    appearance : none;
    width : 13px;
    height : 13px;
    border : 1px solid #1c5180;
    background-color : #f6f6f4;
  }

  & input:checked::before {
    content : '';
    display : block;
    width : 7px;
    height : 4px;
    margin : 2px;
    border-left : 2px solid #21a121;
    border-bottom : 2px solid #21a121;
    transform : rotate(-45deg);
  }
`;

const DealButton = styled.button`
  display : flex;
  flex-direction : column;
  width : 76px;
  height : 54px;
  padding : 0 4px;
  border : 1px solid #003c74;
  border-radius : 3px;
  background : linear-gradient(#ffffff, #ecebe5);
  color : ${(p) => p.$color};
  text-align : center;

  & > b {
    width : 100%;
    height : 27px;
    border-bottom : 1px solid #aca899;
    color : ${(p) => p.$price};
    font-family : ${BOLD};
    font-size : 14px;
    line-height : 25px;
  }

  & > span {
    width : 100%;
    font-size : 20px;
    line-height : 26px;
  }
`;

const TabBar = styled.div`
  display : flex;
  height : 21px;
  padding-left : ${(p) => (p.$indent ? 2 : 0)}px;
  border-top : 1px solid #000;
  margin-top : 2px;
`;

const TabWrap = styled.button`
  flex : none;
  display : flex;
  height : 20px;
  border : none;
  background : none;

  & + & {
    margin-left : -11px;
  }
`;

const TabText = styled.span`
  border-bottom : 1px solid #888;
  background-color : ${(p) => (p.$active ? '#fff' : 'transparent')};
  line-height : 19px;
`;

const PositionsPanel = styled.div`
  flex : 1;
  display : flex;
  flex-direction : column;
  min-width : 0;
  border-right : 1px solid #e0e0e0;
`;

const Toolbar = styled.div`
  display : flex;
  gap : 7px;
  height : 22px;
  padding : 1px 0 0 5px;
`;

const Sheet = styled.div`
  flex : 1;
  min-height : 0;
  border-top : 1px solid #a0a0a0;
  background-color : #fff;
  overflow : hidden;
`;

const DataTable = styled.table`
  table-layout : fixed;
  width : ${(p) => (p.$width ? `${p.$width}px` : '100%')};
  border-collapse : separate;
  border-spacing : 0;
  font-size : 12px;
  line-height : 18px;
  white-space : nowrap;

  & th {
    height : 25px;
    padding : 0 0 0 5px;
    border-right : 1px solid #a0a0a0;
    border-bottom : 1px solid #a0a0a0;
    background : linear-gradient(#ffffff 40%, #f1f2f4);
    font-weight : 400;
    text-align : left;
  }

  & td {
    height : 21px;
    padding : 0 0 0 5px;
    border-right : 1px solid #ececec;
    border-bottom : 1px solid #ececec;
    overflow : hidden;
  }
`;

const Col = styled.col`
  width : ${(p) => p.$width}px;
`;

const Row = styled.tr`
  color : ${(p) => p.$color || '#000'};
`;

const SortMark = styled.svg`
  display : inline-block;
  margin-left : 10px;
`;

const AccountBar = styled.div`
  display : flex;
  height : 22px;
`;

const AccountTab = styled.button`
  width : 62px;
  height : 19px;
  border : none;
  border-right : 1px solid #999;
  background-color : #f4f4f4;
  font-size : 14px;
  line-height : 16px;
`;

const AccountRest = styled.div`
  flex : 1;
  margin-top : 1px;
  border-top : 1px solid #fff;
  border-bottom : 1px solid #999;
  background-color : #ebebeb;
`;

const FillsPanel = styled.div`
  flex : none;
  display : flex;
  flex-direction : column;
  width : 459px;
  padding-left : 7px;
  border-left : 2px solid #a0a0a0;
  overflow : hidden;
`;

const RefreshBar = styled(Toolbar)`
  padding-left : 179px;
`;

const FillsFrame = styled.div`
  flex : 1;
  display : flex;
  flex-direction : column;
  min-height : 0;
  padding : 2px 0 0 2px;
  border-top : 1px solid #a0a0a0;
  border-left : 1px solid #a0a0a0;

  & > ${Sheet} {
    border-left : 1px solid #a0a0a0;
  }
`;

const ScrollRow = styled.div`
  display : flex;
  align-items : center;
  height : 17px;
  background-color : #f0f0f0;
`;

const Thumb = styled.div`
  display : grid;
  place-items : center;
  width : 248px;
  height : 15px;
  border : 1px solid #999;
  border-radius : 2px;
  background : linear-gradient(#f5f5f5 50%, #dcdcdc 50%);
`;

const StatusWindow = styled.div`
  position : absolute;
  top : 504px;
  left : 17px;
  right : 379px;
  border : 4px solid #000;
  background-color : #f4f4f4;
  padding : 2px;
  box-shadow : 2px 2px 0 #777;
`;

const StatusBar = styled.div`
  display : flex;
  align-items : center;
  gap : 8px;
  height : 20px;
  padding : 0 4px 0 2px;
  background-color : #bfcddb;
  color : #3c4650;
  line-height : 20px;
`;
